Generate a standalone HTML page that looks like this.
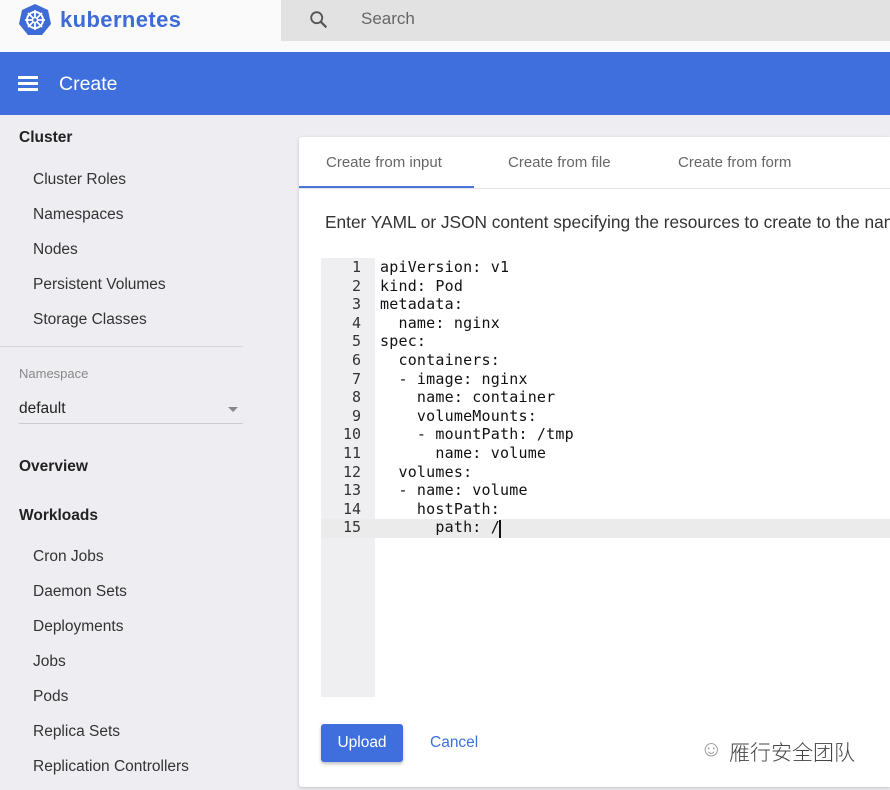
<!DOCTYPE html><html><head><style>
body{margin:0;width:890px;height:790px;overflow:hidden;background:#eeeef2;font-family:"Liberation Sans",Arial,sans-serif;position:relative}
.a{position:absolute;white-space:nowrap}
.s{font-size:15.5px;color:#333;left:33px}
.h{font-size:15.5px;font-weight:bold;color:#222;left:19px}
.code{font-family:"DejaVu Sans Mono",monospace;font-size:15px;color:#111;line-height:18.6px}
</style></head><body>
<div class="a" style="left:0;top:0;width:890px;height:52px;background:#fafafa"></div>
<div class="a" style="left:281px;top:0;width:609px;height:41px;background:#e2e2e2"></div>
<svg class="a" style="left:308px;top:9px" width="22" height="22" viewBox="0 0 24 24"><circle cx="9.5" cy="9.5" r="6" fill="none" stroke="#555" stroke-width="2"/><path d="M14 14l6 6" stroke="#555" stroke-width="2.4"/></svg>
<div class="a" style="left:361px;top:9px;font-size:17px;color:#666">Search</div>
<svg class="a" style="left:18px;top:3px" width="34" height="34" viewBox="0 0 34 34"><path d="M17 1l13 6 3 14-9 11H10L1 21 4 7z" fill="#3e6bd6"/><circle cx="17" cy="17" r="8" fill="none" stroke="#fff" stroke-width="2"/><path d="M17 7v20M7 17h20M10 10l14 14M24 10L10 24" stroke="#fff" stroke-width="1.8"/><circle cx="17" cy="17" r="2.5" fill="#3e6bd6" stroke="#fff" stroke-width="1.5"/></svg>
<div class="a" style="left:60px;top:7px;font-size:22px;font-weight:bold;color:#3e6bd6;letter-spacing:0.4px">kubernetes</div>
<div class="a" style="left:0;top:52px;width:890px;height:63px;background:#3f6fdc"></div>
<div class="a" style="left:18px;top:76px;width:20px;height:2.5px;background:#fff;box-shadow:0 6px 0 #fff,0 12px 0 #fff"></div>
<div class="a" style="left:59px;top:73px;font-size:19.5px;color:#fff">Create</div>
<div class="a h" style="top:129px">Cluster</div>
<div class="a s" style="top:171px">Cluster Roles</div>
<div class="a s" style="top:206px">Namespaces</div>
<div class="a s" style="top:241px">Nodes</div>
<div class="a s" style="top:276px">Persistent Volumes</div>
<div class="a s" style="top:311px">Storage Classes</div>
<div class="a" style="left:0;top:346px;width:243px;height:1px;background:#d6d6da"></div>
<div class="a" style="left:19px;top:366px;font-size:13px;color:#888">Namespace</div>
<div class="a" style="left:19px;top:400px;font-size:15.5px;color:#222">default</div>
<div class="a" style="left:228px;top:407px;border:5px solid transparent;border-top-color:#888"></div>
<div class="a" style="left:19px;top:423px;width:224px;height:1px;background:#ccc"></div>
<div class="a h" style="top:458px">Overview</div>
<div class="a h" style="top:507px">Workloads</div>
<div class="a s" style="top:548px">Cron Jobs</div>
<div class="a s" style="top:583px">Daemon Sets</div>
<div class="a s" style="top:618px">Deployments</div>
<div class="a s" style="top:653px">Jobs</div>
<div class="a s" style="top:688px">Pods</div>
<div class="a s" style="top:723px">Replica Sets</div>
<div class="a s" style="top:758px">Replication Controllers</div>
<div class="a" style="left:299px;top:137px;width:591px;height:650px;background:#fff;border-radius:3px 0 0 3px;box-shadow:0 1px 3px rgba(0,0,0,.2);overflow:hidden">
<div class="a" style="left:27px;top:17px;font-size:15px;color:#666">Create from input</div>
<div class="a" style="left:209px;top:17px;font-size:15px;color:#666">Create from file</div>
<div class="a" style="left:379px;top:17px;font-size:15px;color:#666">Create from form</div>
<div class="a" style="left:0;top:51px;width:591px;height:1px;background:#e4e4e4"></div>
<div class="a" style="left:0;top:49px;width:175px;height:2px;background:#4a74d8"></div>
<div class="a" style="left:26px;top:75px;font-size:17.3px;color:#333">Enter YAML or JSON content specifying the resources to create to the namespace</div>
<div class="a" style="left:22px;top:121px;width:54px;height:439px;background:#efeff1"></div>
<div class="a" style="left:22px;top:382px;width:569px;height:19px;background:#ebebeb"></div>
<div class="a code" style="left:22px;top:121px;width:40px;text-align:right;color:#333;white-space:normal">1<br>2<br>3<br>4<br>5<br>6<br>7<br>8<br>9<br>10<br>11<br>12<br>13<br>14<br>15</div>
<pre class="a code" style="left:81px;top:121px;margin:0;white-space:pre;letter-spacing:0.2px">apiVersion: v1
kind: Pod
metadata:
  name: nginx
spec:
  containers:
  - image: nginx
    name: container
    volumeMounts:
    - mountPath: /tmp
      name: volume
  volumes:
  - name: volume
    hostPath:
      path: /</pre>
<div class="a" style="left:200px;top:383px;width:2px;height:18px;background:#111"></div>
<div class="a" style="left:22px;top:587px;width:82px;height:38px;background:#3f6fdc;border-radius:3px;box-shadow:0 2px 3px rgba(0,0,0,.25);color:#fff;font-size:15.5px;text-align:center;line-height:38px">Upload</div>
<div class="a" style="left:131px;top:597px;font-size:15.5px;color:#3f6fdc">Cancel</div>
<div class="a" style="left:401px;top:599px;font-size:22px;color:#999">☺</div>
<div class="a" style="left:430px;top:600px;font-size:21px;color:#444;font-family:'Noto Sans CJK SC',sans-serif;font-weight:300">雁行安全团队</div>
</div>
</body></html>
